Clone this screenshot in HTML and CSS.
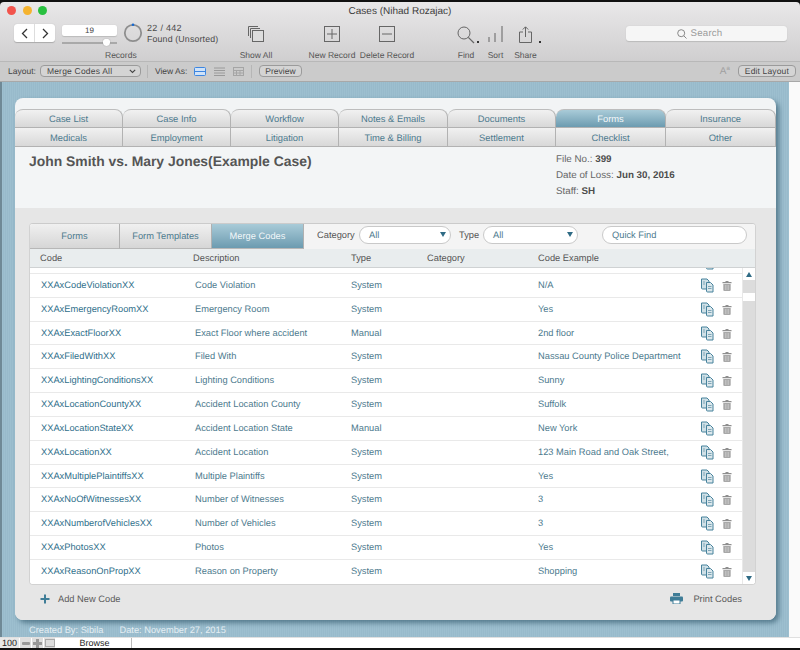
FILE: index.html
```html
<!DOCTYPE html>
<html lang="en">
<head>
<meta charset="utf-8">
<title>Cases (Nihad Rozajac)</title>
<link rel="stylesheet" href="styles.css">
</head>
<body>
<svg class="defs" width="0" height="0" aria-hidden="true">
  <symbol id="copy" viewBox="0 0 14 15">
    <path d="M1.500 1h5.500l2 2v8H2.500a1 1 0 0 1-1-1z" fill="#cfe0e7" stroke="#47829c" stroke-width="1"/>
    <path d="M6.500 4.500h4l2.500 2.500v7H7.500a1 1 0 0 1-1-1z" fill="#dbe7ec" stroke="#47829c" stroke-width="1"/>
    <path d="M8 8.500h3.500M8 10.500h3.500M3 4h2M3 6h2" stroke="#7fa6b7" stroke-width="1"/>
  </symbol>
  <symbol id="trash" viewBox="0 0 10 11">
    <path d="M3.500 1h3v1h3v1.200H.5V2h3z" fill="#8f8f8f"/>
    <path d="M1.300 4h7.400v6a1 1 0 0 1-1 1H2.300a1 1 0 0 1-1-1z" fill="#a8a8a8"/>
    <path d="M3.500 5v5M5 5v5M6.500 5v5" stroke="#d0d0d0" stroke-width=".6"/>
  </symbol>
</svg>
<div class="window">
  <header class="chrome">
    <div class="titlebar">
      <div class="lights"><i class="light red"></i><i class="light yellow"></i><i class="light green"></i></div>
      <div class="wintitle">Cases (Nihad Rozajac)</div>
    </div>
    <div class="toolbar">
      <div class="navbtns">
        <span class="navbtn"><svg width="7" height="11" viewBox="0 0 7 11"><path d="M6 1 1.500 5.500 6 10" fill="none" stroke="#333" stroke-width="1.300"/></svg></span>
        <span class="navbtn"><svg width="7" height="11" viewBox="0 0 7 11"><path d="M1 1l4.500 4.500L1 10" fill="none" stroke="#333" stroke-width="1.300"/></svg></span>
      </div>
      <div class="recordbox">
        <div class="recinput">19</div>
        <div class="slider"><i class="thumb"></i></div>
      </div>
      <svg class="ring" width="20" height="20" viewBox="0 0 20 20"><circle cx="10" cy="10" r="8.200" fill="none" stroke="#8e8e8e" stroke-width="1.800"/><circle cx="10" cy="1.800" r="1.300" fill="#1668d0"/></svg>
      <div class="found"><div class="count">22 / 442</div><div>Found (Unsorted)</div></div>
      <div class="reclabel">Records</div>
      <div class="tool showall">
        <svg width="18" height="18" viewBox="0 0 18 18"><g fill="none" stroke="#666"><path d="M1.500 11V1.500H11"/><path d="M3.500 13V3.500H13"/><rect x="5.500" y="5.500" width="11" height="11" fill="#ddd"/></g></svg>
        <span>Show All</span>
      </div>
      <div class="tool newrec">
        <svg width="16" height="16" viewBox="0 0 16 16"><rect x=".5" y=".5" width="15" height="15" fill="none" stroke="#666"/><path d="M8 3v10M3 8h10" stroke="#666"/></svg>
        <span>New Record</span>
      </div>
      <div class="tool delrec">
        <svg width="16" height="16" viewBox="0 0 16 16"><rect x=".5" y=".5" width="15" height="15" fill="none" stroke="#666"/><path d="M3 8h10" stroke="#666"/></svg>
        <span>Delete Record</span>
      </div>
      <div class="tool find">
        <svg width="18" height="18" viewBox="0 0 18 18"><circle cx="7" cy="7" r="6" fill="none" stroke="#666"/><path d="M11.300 11.300 17 17" stroke="#666" stroke-width="1.200"/></svg>
        <span>Find</span><i class="dot"></i>
      </div>
      <div class="tool sort">
        <svg width="15" height="16" viewBox="0 0 15 16"><path d="M1 16v-5M7 16V7M14 16V0" stroke="#777" stroke-width="1.200"/></svg>
        <span>Sort</span>
      </div>
      <div class="tool share">
        <svg width="13" height="17" viewBox="0 0 13 17"><path d="M4 6H.5v10.500h12V6H9" fill="none" stroke="#666"/><path d="M6.500 11V1M3.800 3.500 6.500.8l2.700 2.700" fill="none" stroke="#666"/></svg>
        <span>Share</span><i class="dot"></i>
      </div>
      <div class="searchbox">
        <svg width="10" height="10" viewBox="0 0 10 10"><circle cx="4.200" cy="4.200" r="3.500" fill="none" stroke="#888"/><path d="M6.800 6.800 9.500 9.500" stroke="#888"/></svg>
        <span>Search</span>
      </div>
    </div>
    <div class="layoutbar">
      <span>Layout:</span>
      <span class="select">Merge Codes All<svg width="7" height="5" viewBox="0 0 7 5"><path d="M.8.8 3.500 3.500 6.200.8" fill="none" stroke="#444" stroke-width="1.100"/></svg></span>
      <i class="sep"></i>
      <span>View As:</span>
      <svg class="viewicon first" width="12" height="9" viewBox="0 0 12 9"><rect x=".5" y=".5" width="11" height="8" rx="1" fill="#cfe2f8" stroke="#3d86e0"/><path d="M0 4.500h12" stroke="#3d86e0"/></svg>
      <svg class="viewicon" width="11" height="9" viewBox="0 0 11 9"><path d="M0 1h11M0 3.500h11M0 6h11M0 8.500h11" stroke="#9a9a9a"/></svg>
      <svg class="viewicon" width="11" height="9" viewBox="0 0 11 9"><rect x=".5" y=".5" width="10" height="8" fill="none" stroke="#a5a5a5"/><path d="M0 3.500h11M0 6h11M3.500 3v6M7 3v6" stroke="#a5a5a5"/></svg>
      <i class="sep"></i>
      <span class="pill">Preview</span>
      <span class="spacer"></span>
      <span class="fontsize">A<sup>a</sup></span>
      <span class="pill edit">Edit Layout</span>
    </div>
  </header>

  <main class="canvas">
    <section class="card">
      <nav class="tabs">
        <a class="tab top">Case List</a><a class="tab top">Case Info</a><a class="tab top">Workflow</a><a class="tab top">Notes &amp; Emails</a><a class="tab top">Documents</a><a class="tab top active">Forms</a><a class="tab top">Insurance</a>
        <a class="tab">Medicals</a><a class="tab">Employment</a><a class="tab">Litigation</a><a class="tab">Time &amp; Billing</a><a class="tab">Settlement</a><a class="tab">Checklist</a><a class="tab">Other</a>
      </nav>
      <div class="casehead">
        <h1>John Smith vs. Mary Jones(Example Case)</h1>
        <dl class="facts">
          <div>File No.: <b>399</b></div>
          <div>Date of Loss: <b>Jun 30, 2016</b></div>
          <div>Staff: <b>SH</b></div>
        </dl>
      </div>
      <div class="lower">
        <div class="panel">
          <div class="subbar">
            <a class="subtab">Forms</a><a class="subtab">Form Templates</a><a class="subtab active">Merge Codes</a>
            <label class="flabel cat">Category</label>
            <span class="drop catdrop">All<i class="tri"></i></span>
            <label class="flabel typ">Type</label>
            <span class="drop typedrop">All<i class="tri"></i></span>
            <span class="quick">Quick Find</span>
          </div>
          <div class="colhead">
            <span>Code</span><span>Description</span><span>Type</span><span>Category</span><span>Code Example</span>
          </div>
          <div class="listwrap">
            <div class="list">
              <div class="stub"><svg class="stubicon" width="14" height="15"><use href="#copy"/></svg></div>
              <div class="row"><span class="c">XXAxCodeViolationXX</span><span>Code Violation</span><span>System</span><span></span><span>N/A</span><span class="acts"><svg width="14" height="15"><use href="#copy"/></svg><svg width="10" height="11"><use href="#trash"/></svg></span></div>
              <div class="row"><span class="c">XXAxEmergencyRoomXX</span><span>Emergency Room</span><span>System</span><span></span><span>Yes</span><span class="acts"><svg width="14" height="15"><use href="#copy"/></svg><svg width="10" height="11"><use href="#trash"/></svg></span></div>
              <div class="row"><span class="c">XXAxExactFloorXX</span><span>Exact Floor where accident</span><span>Manual</span><span></span><span>2nd floor</span><span class="acts"><svg width="14" height="15"><use href="#copy"/></svg><svg width="10" height="11"><use href="#trash"/></svg></span></div>
              <div class="row"><span class="c">XXAxFiledWithXX</span><span>Filed With</span><span>System</span><span></span><span>Nassau County Police Department</span><span class="acts"><svg width="14" height="15"><use href="#copy"/></svg><svg width="10" height="11"><use href="#trash"/></svg></span></div>
              <div class="row"><span class="c">XXAxLightingConditionsXX</span><span>Lighting Conditions</span><span>System</span><span></span><span>Sunny</span><span class="acts"><svg width="14" height="15"><use href="#copy"/></svg><svg width="10" height="11"><use href="#trash"/></svg></span></div>
              <div class="row"><span class="c">XXAxLocationCountyXX</span><span>Accident Location County</span><span>System</span><span></span><span>Suffolk</span><span class="acts"><svg width="14" height="15"><use href="#copy"/></svg><svg width="10" height="11"><use href="#trash"/></svg></span></div>
              <div class="row"><span class="c">XXAxLocationStateXX</span><span>Accident Location State</span><span>Manual</span><span></span><span>New York</span><span class="acts"><svg width="14" height="15"><use href="#copy"/></svg><svg width="10" height="11"><use href="#trash"/></svg></span></div>
              <div class="row"><span class="c">XXAxLocationXX</span><span>Accident Location</span><span>System</span><span></span><span>123 Main Road and Oak Street,</span><span class="acts"><svg width="14" height="15"><use href="#copy"/></svg><svg width="10" height="11"><use href="#trash"/></svg></span></div>
              <div class="row"><span class="c">XXAxMultiplePlaintiffsXX</span><span>Multiple Plaintiffs</span><span>System</span><span></span><span>Yes</span><span class="acts"><svg width="14" height="15"><use href="#copy"/></svg><svg width="10" height="11"><use href="#trash"/></svg></span></div>
              <div class="row"><span class="c">XXAxNoOfWitnessesXX</span><span>Number of Witnesses</span><span>System</span><span></span><span>3</span><span class="acts"><svg width="14" height="15"><use href="#copy"/></svg><svg width="10" height="11"><use href="#trash"/></svg></span></div>
              <div class="row"><span class="c">XXAxNumberofVehiclesXX</span><span>Number of Vehicles</span><span>System</span><span></span><span>3</span><span class="acts"><svg width="14" height="15"><use href="#copy"/></svg><svg width="10" height="11"><use href="#trash"/></svg></span></div>
              <div class="row"><span class="c">XXAxPhotosXX</span><span>Photos</span><span>System</span><span></span><span>Yes</span><span class="acts"><svg width="14" height="15"><use href="#copy"/></svg><svg width="10" height="11"><use href="#trash"/></svg></span></div>
              <div class="row last"><span class="c">XXAxReasonOnPropXX</span><span>Reason on Property</span><span>System</span><span></span><span>Shopping</span><span class="acts"><svg width="14" height="15"><use href="#copy"/></svg><svg width="10" height="11"><use href="#trash"/></svg></span></div>
            </div>
            <div class="scrollbar">
              <span class="arrow"><i class="tri up"></i></span>
              <span class="track short"></span>
              <span class="knob"></span>
              <span class="track grow"></span>
              <span class="arrow"><i class="tri"></i></span>
            </div>
          </div>
        </div>
        <div class="actions">
          <span class="action add"><svg width="10" height="10" viewBox="0 0 10 10"><path d="M5 .5v9M.5 5h9" stroke="#3f7d97" stroke-width="2"/></svg>Add New Code</span>
          <span class="action print"><svg width="13" height="11" viewBox="0 0 13 11"><rect x="3" y="0" width="7" height="3" fill="#3f7d97"/><rect x="0" y="3.500" width="13" height="5" rx="1" fill="#3f7d97"/><rect x="3" y="7" width="7" height="4" fill="#fff" stroke="#3f7d97"/></svg>Print Codes</span>
        </div>
      </div>
    </section>
    <footer class="meta"><span>Created By: Sibila</span><span>Date: November 27, 2015</span></footer>
  </main>
  <div class="status">
    <span class="zoom">100</span>
    <span class="sbtn"><svg width="8" height="3" viewBox="0 0 8 3"><rect width="8" height="3" rx="1" fill="#999"/></svg></span>
    <span class="sbtn"><svg width="9" height="9" viewBox="0 0 9 9"><path d="M4.500 0v9M0 4.500h9" stroke="#999" stroke-width="3"/></svg></span>
    <span class="sbtn"><svg width="10" height="8" viewBox="0 0 10 8"><rect x=".5" y=".5" width="9" height="7" fill="#ddd" stroke="#aaa"/></svg></span>
    <span class="mode">Browse</span>
  </div>
</div>
</body>
</html>
```

FILE: styles.css
```css
* { box-sizing: border-box; }
html, body { margin: 0; padding: 0; }
body {
  width: 800px;
  height: 650px;
  overflow: hidden;
  background: #111;
  font-family: "Liberation Sans", Arial, sans-serif;
  color: #444;
  text-rendering: geometricPrecision;
}
.defs { position: absolute; }
.window { height: 650px; padding: 2px 0; display: flex; flex-direction: column; background: #111; }

/* window chrome */
.chrome { flex: none; height: 80px; background: linear-gradient(#e9e8e9, #cfcecf 75%); display: flex; flex-direction: column; border-radius: 4px 4px 0 0; }
.titlebar { height: 18px; position: relative; display: flex; align-items: center; justify-content: center; flex: none; }
.lights { position: absolute; left: 7px; top: 4px; display: flex; gap: 6.500px; }
.light { width: 9px; height: 9px; border-radius: 50%; display: block; }
.red { background: #f2544c; }
.yellow { background: #f5b32f; }
.green { background: #28c03f; }
.wintitle { font-size: 10px; color: #3d3d3d; }

.toolbar { position: relative; height: 42px; flex: none; border-bottom: 1px solid #b8b8b8; font-size: 8.500px; color: #555; }
.navbtns { position: absolute; left: 14px; top: 4px; width: 41px; height: 18px; display: flex; background: #fff; border-radius: 3px; box-shadow: 0 .5px 1px #aaa; }
.navbtn { flex: 1; display: flex; align-items: center; justify-content: center; }
.navbtn + .navbtn { border-left: 1px solid #ddd; }
.recordbox { position: absolute; left: 62px; top: 5px; width: 55px; }
.recinput { height: 11px; background: #fff; border-radius: 2px; text-align: center; font-size: 8px; line-height: 11px; color: #444; box-shadow: 0 .5px 1px #bbb; }
.slider { margin-top: 6px; height: 2px; background: #a9a9a9; position: relative; }
.thumb { position: absolute; left: 41px; top: -3px; width: 7px; height: 7px; background: #fff; border-radius: 2px 2px 50% 50%; box-shadow: 0 0 1px #777; }
.ring { position: absolute; left: 123px; top: 3px; }
.found { position: absolute; left: 147px; top: 3px; font-size: 8.800px; line-height: 11px; color: #4a4a4a; letter-spacing: .15px; white-space: nowrap; }
.count { font-size: 9px; letter-spacing: .3px; }
.reclabel { position: absolute; left: 105px; top: 30px; }
.tool { position: absolute; top: 5px; display: flex; flex-direction: column; align-items: center; white-space: nowrap; height: 36px; }
.tool span { position: absolute; top: 25px; }
.showall { left: 247px; width: 18px; }
.newrec { left: 324px; width: 16px; top: 6px; }
.delrec { left: 379px; width: 16px; top: 6px; }
.delrec span, .newrec span { top: 24px; }
.find { left: 457px; width: 18px; top: 6px; }
.find span, .sort span, .share span { top: 24px; }
.sort { left: 488px; width: 15px; top: 6px; }
.share { left: 519px; width: 13px; top: 6px; }
.dot { position: absolute; width: 2px; height: 2px; background: #333; top: 15px; right: -4px; }
.find .dot { right: -4px; }
.share .dot { right: -9px; }
.searchbox { position: absolute; left: 626px; top: 6px; width: 161px; height: 15px; background: #f6f6f6; border-radius: 3px; display: flex; align-items: center; justify-content: center; gap: 4px; font-size: 9.700px; color: #9a9a9a; box-shadow: 0 .5px 1px #bbb; padding-right: 14px; letter-spacing: .2px; }

.layoutbar { height: 20px; flex: none; background: #cbcbcb; border-bottom: 1px solid #a8a8a8; display: flex; align-items: center; padding: 0 4px 1px 8px; font-size: 8.500px; color: #444; }
.select { margin-left: 4px; width: 101px; height: 12px; border: 1px solid #9b9b9b; border-radius: 4px; display: flex; align-items: center; justify-content: space-between; padding: 0 4px 0 6px; background: #d4d4d4; letter-spacing: .2px; }
.sep { width: 1px; height: 13px; background: #b6b6b6; margin: 0 7px 0 6px; }
.viewicon { margin-left: 8px; }
.viewicon.first { margin-left: 7px; }
.viewicon + .sep { margin-left: 7px; }
.pill { border: 1px solid #9b9b9b; border-radius: 4px; height: 12px; line-height: 10px; padding: 0 5px; background: #d4d4d4; }
.spacer { flex: 1; }
.fontsize { color: #a0a0a0; font-size: 10px; margin-right: 8px; }
.fontsize sup { font-size: 6px; line-height: 0; }
.edit { letter-spacing: .15px; padding: 0 6px; }

/* canvas */
.canvas {
  flex: 1;
  min-height: 0;
  width: 789px;
  background: repeating-linear-gradient(90deg, #9dbfcf 0 1px, #98bacb 1px 2px);
  padding: 16px 0 0 13px;
  box-shadow: 11px 0 0 #fafafa;
  display: flex;
  flex-direction: column;
  border-left: 2px solid #6f8996;
}
.card { width: 761px; height: 522px; flex: none; background: #f2f4f5; border-radius: 8px; display: flex; flex-direction: column; box-shadow: 3px 3px 5px rgba(40,80,100,.6); padding-top: 11px; overflow: hidden; }
.tabs { display: grid; grid-template-columns: 108px 108px 108px 109px 108px 110px 110px; flex: none; }
.tab { height: 19px; font-size: 9.400px; line-height: 19px; text-align: center; color: #4d7a8e; background: linear-gradient(#f1f1f1, #d8d8d8); border-right: 1px solid #b2b2b2; border-bottom: 1px solid #b2b2b2; }
.tab.top { border-radius: 8px 8px 0 0; border-top: 1px solid #bdbdbd; line-height: 18px; }
.tab.active { background: linear-gradient(#a9cbd8, #6c9bb0); color: #f4f8fa; }
.casehead { height: 61px; flex: none; display: flex; padding: 6px 0 0 14px; background: #f3f5f6; }
h1 { margin: 0; font-size: 13.900px; font-weight: bold; color: #555; width: 527px; flex: none; line-height: 17px; }
.facts { margin: 0; font-size: 9.800px; color: #666; line-height: 16px; margin-top: -1px; }
.facts b { color: #4d4d4d; }

.lower { flex: 1; background: #e6e6e6; padding: 15px 20px 0 14px; display: flex; flex-direction: column; }
.panel { height: 362px; flex: none; display: flex; flex-direction: column; border-radius: 4px; overflow: hidden; background: #fff; border: 1px solid #d2d2d2; border-top-color: #cbcbcb; }
.subbar { height: 25px; flex: none; background: #f4f4f4; display: flex; align-items: center; font-size: 9.300px; color: #555; }
.subtab { height: 25px; width: 92px; line-height: 25px; text-align: center; color: #4d7a8e; background: linear-gradient(#f0f0f0, #d6d6d6); border-right: 1px solid #b0b0b0; border-bottom: 1px solid #b7b7b7; }
.subtab:first-child { width: 90px; }
.subtab.active { background: linear-gradient(#a9cbd8, #6c9bb0); color: #f2f7f9; }
.flabel { flex: none; margin-bottom: 3px; }
.flabel.cat { margin-left: 13px; width: 42px; }
.flabel.typ { margin-left: 8px; width: 24px; }
.drop { position: relative; flex: none; height: 18px; margin-bottom: 3px; background: #fff; border: 1px solid #c9c9c9; border-radius: 9px; line-height: 16px; padding-left: 9px; color: #4d7a8e; }
.catdrop { width: 92px; }
.typedrop { width: 95px; }
.drop .tri { position: absolute; right: 4px; top: 5px; }
.tri { display: block; width: 0; height: 0; border-left: 3px solid transparent; border-right: 3px solid transparent; border-top: 5px solid #2f6b85; }
.tri.up { border-top: 0; border-bottom: 5px solid #2f6b85; }
.quick { margin-left: 24px; margin-bottom: 3px; flex: none; width: 145px; height: 18px; background: #fff; border: 1px solid #c9c9c9; border-radius: 9px; line-height: 16px; padding-left: 9px; color: #4d7a8e; }

.colhead { display: grid; grid-template-columns: 153px 158px 76px 111px 1fr; height: 19px; flex: none; background: #e9edee; border-bottom: 1px solid #cfd2d3; font-size: 9.300px; line-height: 18px; color: #555; padding-left: 10px; }
.listwrap { flex: 1; display: flex; min-height: 0; background: #fff; }
.list { flex: 1; min-width: 0; }
.stub { height: 6px; border-bottom: 1px solid #e9e9e9; overflow: hidden; position: relative; }
.stubicon { position: absolute; right: 28px; top: -13px; }
.row { display: grid; grid-template-columns: 154px 156px 76px 111px 1fr 42px; height: 23.840px; border-bottom: 1px solid #e9e9e9; font-size: 9.300px; line-height: 23px; color: #4d7a8e; padding-left: 11px; white-space: nowrap; }
.row.last { border-bottom: 0; }
.row .c { color: #2f6f8b; }
.acts { display: flex; align-items: center; gap: 8px; }
.scrollbar { width: 13px; flex: none; display: flex; flex-direction: column; border-left: 1px solid #e8e8e8; }
.arrow { height: 12px; flex: none; display: flex; align-items: center; justify-content: center; background: #fff; }
.track { background: #dcdcdc; }
.track.short { height: 13px; flex: none; }
.track.grow { flex: 1; }
.knob { height: 8px; flex: none; background: #fff; }
.actions { flex: 1; display: flex; justify-content: space-between; align-items: center; padding: 0 15px 8px 11px; font-size: 9.300px; color: #5a5a5a; }
.action { display: flex; align-items: center; gap: 9px; }
.action.add { gap: 8px; }
.action.print { gap: 10px; margin-right: -1px; }
.meta { color: #e4eef3; font-size: 9.300px; display: flex; gap: 16px; padding: 4px 0 0 14px; line-height: 12px; }

/* status bar */
.status { flex: none; height: 11px; background: #fff; display: flex; align-items: center; font-size: 9px; color: #222; border-top: 1px solid #e0e0e0; }
.zoom { width: 19px; padding-left: 2px; background: #e8e8e8; height: 10px; line-height: 10px; }
.sbtn { width: 12px; height: 10px; display: flex; align-items: center; justify-content: center; background: #dedede; border-left: 1px solid #fff; }
.mode { margin-left: 3px; width: 74px; text-align: center; line-height: 10px; border-right: 1px solid #bbb; height: 10px; }
```
